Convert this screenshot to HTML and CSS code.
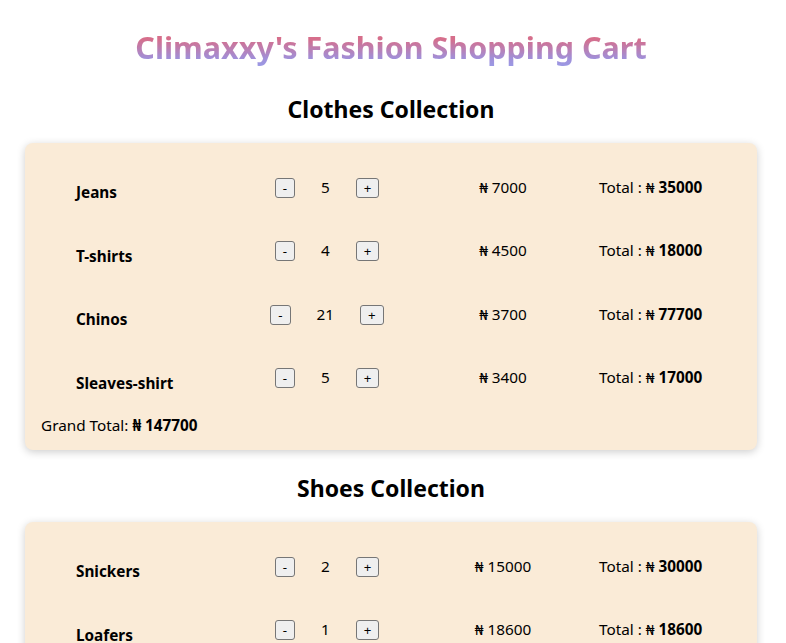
FILE: index.html
```html
<!DOCTYPE html>
<html lang="en">
<head>
<meta charset="utf-8">
<title>Climaxxy's Fashion Shopping Cart</title>
<link rel="stylesheet" href="styles.css">
</head>
<body>
<main class="page">
  <h1 class="title"><span class="title-text">Climaxxy's Fashion Shopping Cart</span></h1>

  <h2 class="section-title">Clothes Collection</h2>
  <section class="card">
    <div class="item">
      <span class="name">Jeans</span>
      <div class="counter"><button class="btn">-</button><span class="qty">5</span><button class="btn">+</button></div>
      <span class="price">₦ 7000</span>
      <span class="total">Total : ₦ <b>35000</b></span>
    </div>
    <div class="item">
      <span class="name">T-shirts</span>
      <div class="counter"><button class="btn">-</button><span class="qty">4</span><button class="btn">+</button></div>
      <span class="price">₦ 4500</span>
      <span class="total">Total : ₦ <b>18000</b></span>
    </div>
    <div class="item">
      <span class="name">Chinos</span>
      <div class="counter"><button class="btn">-</button><span class="qty">21</span><button class="btn">+</button></div>
      <span class="price">₦ 3700</span>
      <span class="total">Total : ₦ <b>77700</b></span>
    </div>
    <div class="item">
      <span class="name">Sleaves-shirt</span>
      <div class="counter"><button class="btn">-</button><span class="qty">5</span><button class="btn">+</button></div>
      <span class="price">₦ 3400</span>
      <span class="total">Total : ₦ <b>17000</b></span>
    </div>
    <p class="grand">Grand Total: <b>₦ 147700</b></p>
  </section>

  <h2 class="section-title">Shoes Collection</h2>
  <section class="card">
    <div class="item">
      <span class="name">Snickers</span>
      <div class="counter"><button class="btn">-</button><span class="qty">2</span><button class="btn">+</button></div>
      <span class="price">₦ 15000</span>
      <span class="total">Total : ₦ <b>30000</b></span>
    </div>
    <div class="item">
      <span class="name">Loafers</span>
      <div class="counter"><button class="btn">-</button><span class="qty">1</span><button class="btn">+</button></div>
      <span class="price">₦ 18600</span>
      <span class="total">Total : ₦ <b>18600</b></span>
    </div>
    <div class="item">
      <span class="name">Sneakers</span>
      <div class="counter"><button class="btn">-</button><span class="qty">3</span><button class="btn">+</button></div>
      <span class="price">₦ 12000</span>
      <span class="total">Total : ₦ <b>36000</b></span>
    </div>
    <p class="grand">Grand Total: <b>₦ 84600</b></p>
  </section>
</main>
</body>
</html>
```

FILE: styles.css
```css
html, body {
  margin: 0;
  padding: 0;
  background: #ffffff;
}

body {
  font-family: "Noto Sans", "Open Sans", sans-serif;
  color: #000000;
}

.page {
  padding: 27px 29px 40px 25px;
}

.title {
  margin: 0;
  font-size: 30.5px;
  line-height: 40px;
  font-weight: 700;
  text-align: center;
}

.title-text {
  display: inline-block;
  background: linear-gradient(to bottom, #d66e8b 30%, #a18fd8 78%, #9a9ae6 100%);
  -webkit-background-clip: text;
  background-clip: text;
  color: transparent;
}

.title + .section-title {
  margin-top: 26px;
}

.section-title {
  margin: 22px 0 18px;
  font-size: 23px;
  line-height: 32px;
  font-weight: 700;
  text-align: center;
}

.card {
  background: #faebd7;
  border-radius: 8px;
  box-shadow: 0 2px 8px rgba(0, 0, 0, 0.2);
  padding: 13px 0 14px 0;
}

.item {
  display: grid;
  grid-template-columns: 171px 160px 192px 1fr;
  align-items: center;
  height: 63.5px;
  padding-left: 51px;
  font-size: 15.3px;
}

.name {
  font-weight: 700;
  padding-top: 9px;
}

.counter {
  display: flex;
  align-items: center;
  justify-content: center;
}

.qty {
  margin: -2px 26px 0;
  line-height: 20px;
}

.btn {
  height: 20px;
  box-sizing: border-box;
  padding: 0 7px;
  border: 1px solid #767676;
  border-radius: 3px;
  background: #efefef;
  font-family: "Noto Sans", sans-serif;
  font-size: 13.3px;
  line-height: 18px;
  color: #000;
}

.price {
  text-align: center;
  margin-top: -2px;
}

.total {
  margin-top: -2px;
}

.grand {
  margin: 4px 0 0 16px;
  font-size: 15.3px;
  line-height: 22px;
}
```
